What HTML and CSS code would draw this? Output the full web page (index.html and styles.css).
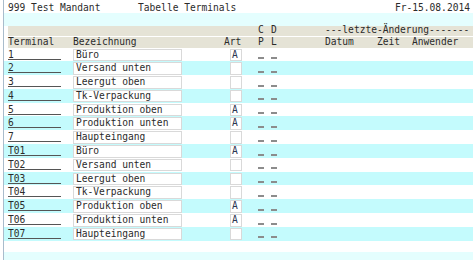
FILE: index.html
```html
<!DOCTYPE html>
<html lang="de">
<head>
  <meta charset="UTF-8" />
  <meta name="viewport" content="width=device-width, initial-scale=1.0" />
  <title>Tabelle Terminals</title>
  <link rel="stylesheet" href="styles.css">
</head>
<body>
  <div class="screen">
    <div class="title">
      <span>999 Test Mandant</span>
      <span>Tabelle Terminals</span>
      <span>Fr-15.08.2014</span>
    </div>
    <div class="band"></div>
    <div class="head head1">
      <span></span><span></span><span></span>
      <span>C</span><span>D</span>
      <span class="wide">---letzte-Änderung-------</span>
    </div>
    <div class="head head2">
      <span>Terminal</span><span>Bezeichnung</span><span>Art</span>
      <span>P</span><span>L</span><span>Datum</span><span>Zeit</span><span>Anwender</span>
    </div>
    <div id="rows"></div>
    <div class="rest"></div>
  </div>

  <script>
    const terminals = [
      ['1', 'Büro', 'A'],
      ['2', 'Versand unten', ''],
      ['3', 'Leergut oben', ''],
      ['4', 'Tk-Verpackung', ''],
      ['5', 'Produktion oben', 'A'],
      ['6', 'Produktion unten', 'A'],
      ['7', 'Haupteingang', ''],
      ['T01', 'Büro', 'A'],
      ['T02', 'Versand unten', ''],
      ['T03', 'Leergut oben', ''],
      ['T04', 'Tk-Verpackung', ''],
      ['T05', 'Produktion oben', 'A'],
      ['T06', 'Produktion unten', 'A'],
      ['T07', 'Haupteingang', ''],
    ];

    const container = document.getElementById('rows');
    terminals.forEach(([nr, name, art]) => {
      container.innerHTML += `
        <div class="row">
          <span class="term">${nr}</span>
          <span class="box">${name}</span>
          <span class="art">${art}</span>
          <span class="blank"></span>
          <span class="blank"></span>
        </div>
      `;
    });
  </script>
</body>
</html>
```

FILE: styles.css
```css
body {
  margin: 0;
  background-color: #ffffff;
  font-family: "DejaVu Sans Mono", monospace;
  font-size: 9.6px;
  color: #2b2b2b;
}
.screen {
  margin-left: 3px;
  border-left: 1px solid #a9bccc;
  min-height: 260px;
}
.title {
  display: grid;
  grid-template-columns: 130px 1fr auto;
  box-sizing: border-box;
  height: 13px;
  padding: 2px 3px 0 4px;
  line-height: 11px;
}
.band {
  height: 13px;
  background-color: #e4fefe;
}
.head {
  display: grid;
  grid-template-columns: 65px 151px 34px 13px 54px 52px 35px 1fr;
  margin-left: 4px;
  background-color: #e5e3d6;
  white-space: pre;
}
.head1 {
  height: 10px;
  line-height: 8.5px;
  margin-bottom: 1px;
}
.head2 {
  height: 10.5px;
  line-height: 10px;
}
.head .wide {
  grid-column: 6 / -1;
}
.row {
  display: grid;
  grid-template-columns: 65px 151px 34px 13px 1fr;
  align-items: start;
  height: 13.8px;
  padding-left: 4px;
  line-height: 13.8px;
}
.row:nth-child(even) {
  background-color: #c4fbfd;
}
.term {
  width: 53px;
  height: 11px;
  border-bottom: 1px solid #555555;
}
.box {
  box-sizing: border-box;
  width: 109px;
  height: 12.5px;
  margin-top: 1px;
  padding-left: 2px;
  border: 1px solid #d9d9d9;
  background-color: #ffffff;
  line-height: 10px;
  white-space: pre;
}
.art {
  box-sizing: border-box;
  width: 12px;
  height: 12.5px;
  margin: 1px 0 0 6px;
  padding-left: 1px;
  border: 1px solid #d9d9d9;
  background-color: #ffffff;
  line-height: 10px;
  color: #2a3550;
}
.blank {
  width: 6px;
  height: 2px;
  margin-top: 9.5px;
  background-color: #8c8c8c;
}
.rest {
  height: 11px;
  border-bottom: 20px solid #e4fefe;
}
```
